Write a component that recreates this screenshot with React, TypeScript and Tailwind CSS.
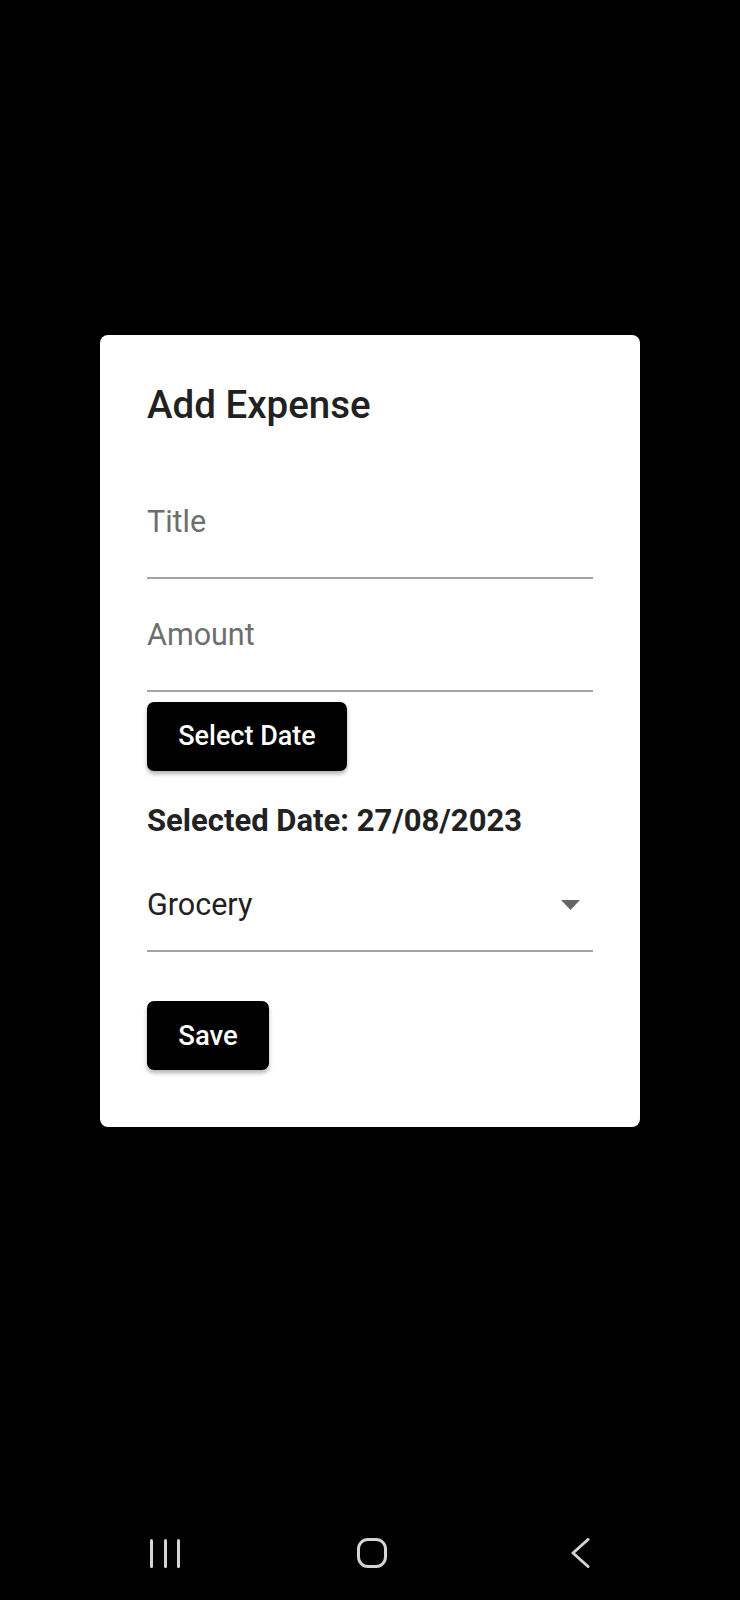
import React from "react";

export default function App() {
  return (
    <div className="flex min-h-[1600px] w-[740px] flex-col bg-black" style={{ fontFamily: "Roboto, 'Noto Sans', sans-serif" }}>
      <div className="ml-[100px] mt-[335px] w-[540px] rounded-[8px] bg-white px-[47px] pb-[57px] pt-[48px]">
        <h1 className="mb-[77px] text-[38.5px] font-medium leading-[44px] text-[#212121]">Add Expense</h1>
        <div className="border-b-2 border-[#a3a3a3] pb-[37px]">
          <div className="text-[30.5px] leading-[36px] text-[#6e6e6e]">Title</div>
        </div>
        <div className="border-b-2 border-[#a3a3a3] pb-[37px] pt-[38px]">
          <div className="text-[30.5px] leading-[36px] text-[#6e6e6e]">Amount</div>
        </div>
        <button className="mt-[10px] flex h-[69px] w-[200px] items-center justify-center rounded-[7px] bg-black text-[27px] font-medium text-white shadow-[0_3px_4px_rgba(0,0,0,0.3)]">
          Select Date
        </button>
        <div className="mt-[32px] text-[31px] font-bold leading-[36px] text-[#222222]">Selected Date: 27/08/2023</div>
        <div className="mt-[48px] flex items-center justify-between border-b-2 border-[#a3a3a3] pb-[27px]">
          <div className="text-[30.5px] leading-[36px] text-[#212121]">Grocery</div>
          <svg width="19" height="10" viewBox="0 0 19 10" className="mr-[13px]">
            <path d="M0 0 L19 0 L9.5 10 Z" fill="#666666" />
          </svg>
        </div>
        <button className="mt-[49px] flex h-[69px] w-[122px] items-center justify-center rounded-[7px] bg-black text-[27.5px] font-medium text-white shadow-[0_3px_4px_rgba(0,0,0,0.3)]">
          Save
        </button>
      </div>
      <div className="mt-auto flex h-[62px] items-start pt-[0px]">
        <div className="ml-[150px] flex h-[30px] w-[30px] items-center justify-between">
          <span className="h-[29px] w-[3px] rounded-full bg-[#d4d4d4]" />
          <span className="h-[29px] w-[3px] rounded-full bg-[#d4d4d4]" />
          <span className="h-[29px] w-[3px] rounded-full bg-[#d4d4d4]" />
        </div>
        <div className="ml-[177px] h-[30px] w-[30px] rounded-[11px] border-[3px] border-[#d4d4d4]" />
        <svg className="ml-[183px]" width="20" height="30" viewBox="0 0 20 30">
          <path d="M18 1.5 L3 15 L18 28.5" fill="none" stroke="#d4d4d4" strokeWidth="3" strokeLinecap="round" strokeLinejoin="round" />
        </svg>
      </div>
    </div>
  );
}
